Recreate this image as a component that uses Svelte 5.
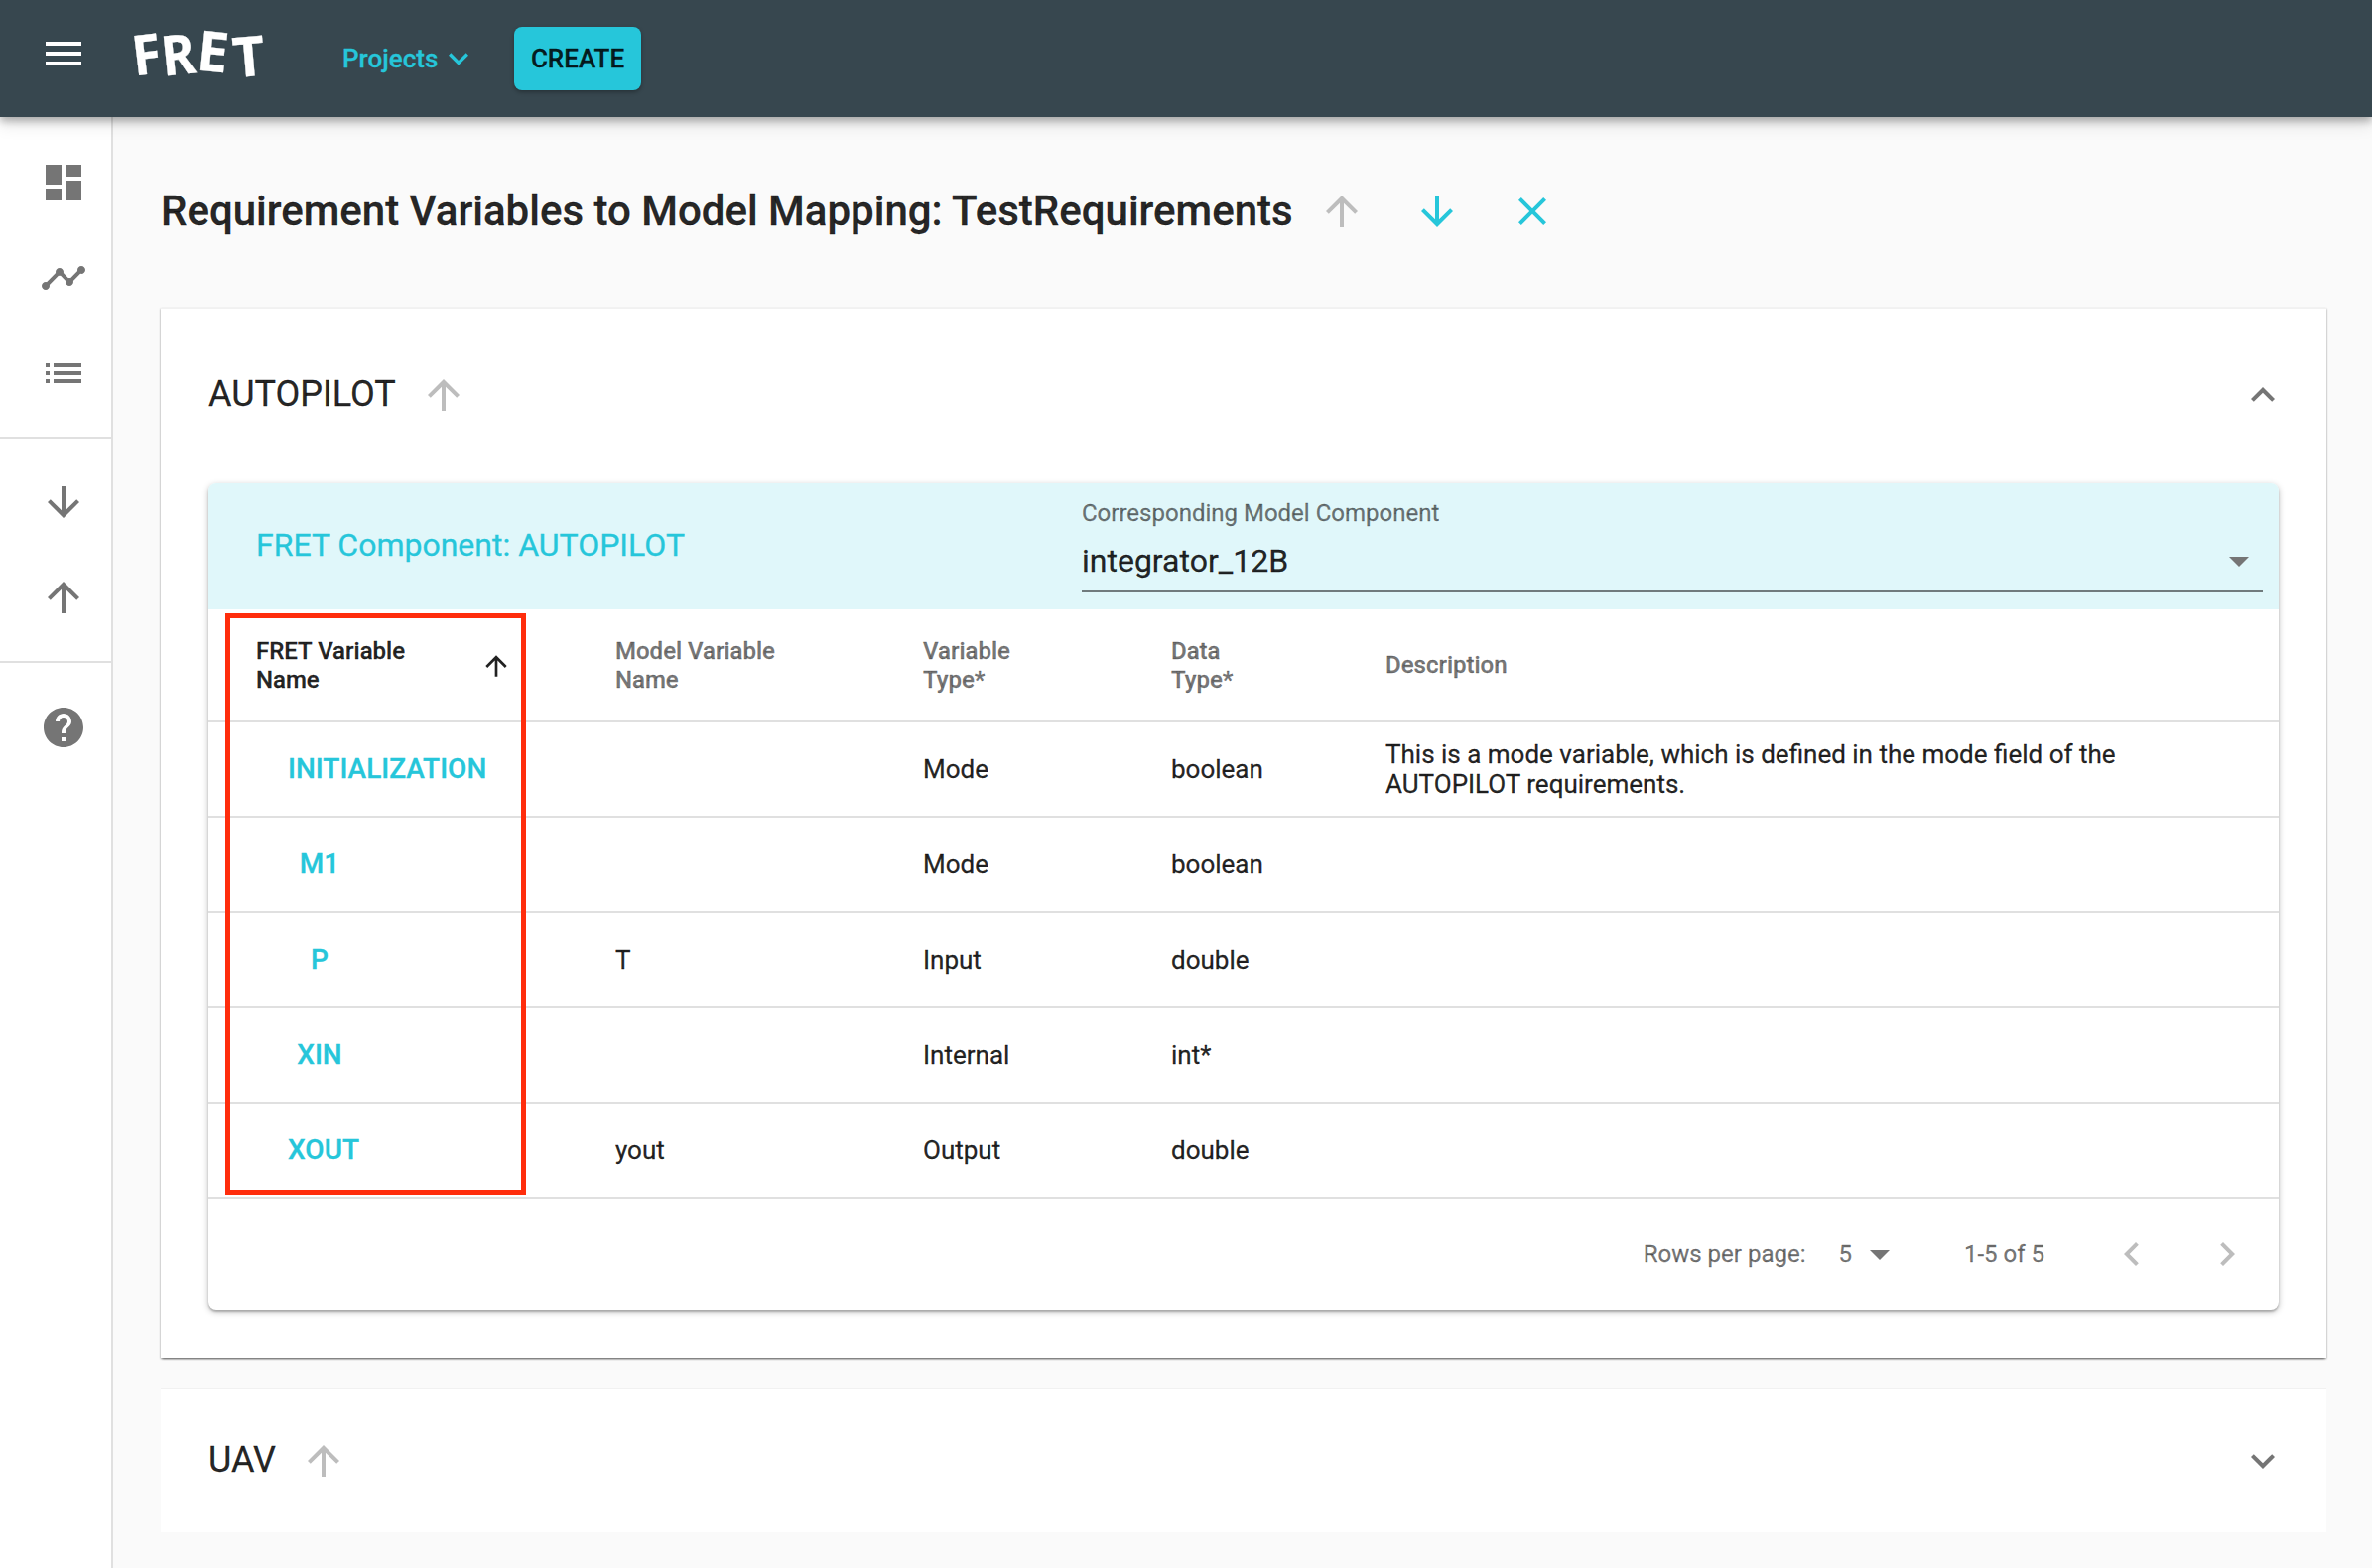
<script>
	const icons = {
		menu: 'M3 18h18v-2H3v2zm0-5h18v-2H3v2zm0-7v2h18V6H3z',
		dashboard: 'M3 13h8V3H3v10zm0 8h8v-6H3v6zm10 0h8V11h-8v10zm0-18v6h8V3h-8z',
		timeline: 'M23 8c0 1.1-.9 2-2 2-.18 0-.35-.02-.51-.07l-3.56 3.55c.05.16.07.34.07.52 0 1.1-.9 2-2 2s-2-.9-2-2c0-.18.02-.36.07-.52l-2.55-2.55c-.16.05-.34.07-.52.07s-.36-.02-.52-.07l-4.55 4.56c.05.16.07.33.07.51 0 1.1-.9 2-2 2s-2-.9-2-2 .9-2 2-2c.18 0 .35.02.51.07l4.56-4.55C8.02 9.36 8 9.18 8 9c0-1.1.9-2 2-2s2 .9 2 2c0 .18-.02.36-.07.52l2.55 2.55c.16-.05.34-.07.52-.07s.36.02.52.07l3.55-3.56C19.02 8.35 19 8.18 19 8c0-1.1.9-2 2-2s2 .9 2 2z',
		list: 'M3 13h2v-2H3v2zm0 4h2v-2H3v2zm0-8h2V7H3v2zm4 4h14v-2H7v2zm0 4h14v-2H7v2zM7 7v2h14V7H7z',
		up: 'M4 12l1.41 1.41L11 7.83V20h2V7.83l5.58 5.59L20 12l-8-8-8 8z',
		down: 'M20 12l-1.41-1.41L13 16.17V4h-2v12.17l-5.58-5.59L4 12l8 8 8-8z',
		close: 'M19 6.41L17.59 5 12 10.59 6.41 5 5 6.41 10.59 12 5 17.59 6.41 19 12 13.41 17.59 19 19 17.59 13.41 12z',
		help: 'M12 2C6.48 2 2 6.48 2 12s4.48 10 10 10 10-4.48 10-10S17.52 2 12 2zm1 17h-2v-2h2v2zm2.07-7.75l-.9.92C13.45 12.9 13 13.5 13 15h-2v-.5c0-1.1.45-2.1 1.17-2.83l1.24-1.26c.37-.36.59-.86.59-1.41 0-1.1-.9-2-2-2s-2 .9-2 2H8c0-2.21 1.79-4 4-4s4 1.79 4 4c0 .88-.36 1.68-.93 2.25z',
		more: 'M16.59 8.59L12 13.17 7.41 8.59 6 10l6 6 6-6z',
		less: 'M12 8l-6 6 1.41 1.41L12 10.83l4.59 4.58L18 14z',
		left: 'M15.41 7.41L14 6l-6 6 6 6 1.41-1.41L10.83 12z',
		right: 'M10 6L8.59 7.41 13.17 12l-4.58 4.59L10 18l6-6z',
		caret: 'M7 10l5 5 5-5z'
	};

	const columns = [
		{ title: 'Model Variable Name', key: 'model' },
		{ title: 'Variable Type*', key: 'type', narrow: true },
		{ title: 'Data Type*', key: 'data', narrow: true },
		{ title: 'Description', key: 'desc' }
	];

	const rows = [
		{
			name: 'INITIALIZATION',
			model: '',
			type: 'Mode',
			data: 'boolean',
			desc: 'This is a mode variable, which is defined in the mode field of the AUTOPILOT requirements.'
		},
		{ name: 'M1', model: '', type: 'Mode', data: 'boolean', desc: '' },
		{ name: 'P', model: 'T', type: 'Input', data: 'double', desc: '' },
		{ name: 'XIN', model: '', type: 'Internal', data: 'int*', desc: '' },
		{ name: 'XOUT', model: 'yout', type: 'Output', data: 'double', desc: '' }
	];
</script>

{#snippet icon(name, cls = '')}
	<svg class="icon {cls}" viewBox="0 0 24 24" aria-hidden="true"><path d={icons[name]} /></svg>
{/snippet}

<div class="app">
	<header class="appbar">
		{@render icon('menu', 'white')}
		<div class="logo"><span>F</span><span>R</span><span>E</span><span>T</span></div>
		<div class="projects">Projects {@render icon('more', 'cyan small')}</div>
		<button class="create">CREATE</button>
	</header>

	<div class="body">
		<nav class="sidebar">
			<div class="nav-group">
				{@render icon('dashboard')}
				{@render icon('timeline')}
				{@render icon('list')}
			</div>
			<div class="nav-group second">
				{@render icon('down')}
				{@render icon('up')}
			</div>
			<div class="nav-group last">
				{@render icon('help')}
			</div>
		</nav>

		<main class="main">
			<div class="title-row">
				<h1>Requirement Variables to Model Mapping: TestRequirements</h1>
				<span class="icon-btn">{@render icon('up', 'disabled')}</span>
				<span class="icon-btn">{@render icon('down', 'cyan')}</span>
				<span class="icon-btn">{@render icon('close', 'cyan')}</span>
			</div>

			<section class="panel open">
				<div class="panel-head">
					<span class="panel-title">AUTOPILOT</span>
					<span class="icon-btn">{@render icon('up', 'disabled')}</span>
					<span class="expand">{@render icon('less')}</span>
				</div>
				<div class="panel-body">
					<div class="card">
						<div class="card-head">
							<div class="component">FRET Component: AUTOPILOT</div>
							<div class="select">
								<div class="select-label">Corresponding Model Component</div>
								<div class="select-value">
									<span>integrator_12B</span>
									{@render icon('caret')}
								</div>
							</div>
						</div>

						<table>
							<colgroup>
								<col class="c-name" />
								<col class="c-model" />
								<col class="c-type" />
								<col class="c-data" />
								<col />
							</colgroup>
							<thead>
								<tr>
									<th class="first">
										<div class="sorted">
											<span class="head-label active">FRET Variable Name</span>
											<svg class="sort" viewBox="0 0 24 24" aria-hidden="true"><path d={icons.up} /></svg>
										</div>
									</th>
									{#each columns as col}
										<th><div class="head-label" class:narrow={col.narrow}>{col.title}</div></th>
									{/each}
								</tr>
							</thead>
							<tbody>
								{#each rows as row}
									<tr>
										<td class="first"><span class="var-btn">{row.name}</span></td>
										{#each columns as col}
											<td class={col.key}>{row[col.key]}</td>
										{/each}
									</tr>
								{/each}
							</tbody>
						</table>

						<div class="pager">
							<span class="rows-label">Rows per page:</span>
							<span class="rows-value">5</span>
							{@render icon('caret')}
							<span class="range">1-5 of 5</span>
							<span class="icon-btn">{@render icon('left', 'disabled')}</span>
							<span class="icon-btn">{@render icon('right', 'disabled')}</span>
						</div>

						<div class="highlight"></div>
					</div>
				</div>
			</section>

			<section class="panel">
				<div class="panel-head closed">
					<span class="panel-title">UAV</span>
					<span class="icon-btn">{@render icon('up', 'disabled')}</span>
					<span class="expand">{@render icon('more')}</span>
				</div>
			</section>
		</main>
	</div>
</div>

<style>
	:global(body) {
		margin: 0;
		background: #fafafa;
	}
	.app {
		height: 1580px;
		overflow: hidden;
		display: flex;
		flex-direction: column;
		font-family: Roboto, "Liberation Sans", sans-serif;
		color: rgba(0, 0, 0, 0.87);
		-webkit-text-stroke: 0.3px;
	}
	.icon {
		width: 48px;
		height: 48px;
		flex: none;
		fill: #757575;
	}
	.icon.white {
		fill: #fff;
	}
	.icon.cyan {
		fill: #26c6da;
	}
	.icon.disabled {
		fill: #bdbdbd;
	}
	.icon.small {
		width: 40px;
		height: 40px;
	}
	.icon-btn {
		width: 96px;
		height: 96px;
		flex: none;
		display: flex;
		align-items: center;
		justify-content: center;
	}

	.appbar {
		height: 118px;
		flex: none;
		box-sizing: border-box;
		padding: 0 0 0 40px;
		display: flex;
		align-items: center;
		background: #37474f;
		box-shadow: 0 4px 8px rgba(0, 0, 0, 0.28), 0 8px 16px rgba(0, 0, 0, 0.1);
		position: relative;
		z-index: 2;
	}
	.appbar > .icon {
		margin-top: -10px;
	}
	.logo {
		width: 135px;
		margin-left: 44px;
		margin-top: -12px;
		display: flex;
		font-family: "Noto Sans", sans-serif;
		font-size: 56px;
		font-weight: 700;
		line-height: 56px;
		color: #fff;
	}
	.logo span {
		display: inline-block;
	}
	.logo span:nth-child(1) {
		transform: rotate(-7deg) scaleX(0.95);
	}
	.logo span:nth-child(2) {
		transform: rotate(-6deg) scaleX(0.92);
		margin-left: -2px;
	}
	.logo span:nth-child(3) {
		transform: rotate(6deg) translateY(-3px);
		margin-left: 1px;
	}
	.logo span:nth-child(4) {
		transform: rotate(-5deg) translateY(2px);
		margin-left: 4px;
	}
	.projects {
		margin-left: 78px;
		width: 173px;
		flex: none;
		display: flex;
		align-items: center;
		gap: 1px;
		font-size: 26px;
		font-weight: 500;
		color: #26c6da;
	}
	.create {
		width: 128px;
		height: 64px;
		padding: 0;
		border: 0;
		border-radius: 8px;
		background: #26c6da;
		color: rgba(0, 0, 0, 0.87);
		font-family: inherit;
		font-size: 26px;
		font-weight: 500;
		box-shadow: 0 2px 4px rgba(0, 0, 0, 0.3);
	}

	.body {
		flex: 1;
		display: flex;
		min-height: 0;
	}
	.sidebar {
		width: 114px;
		flex: none;
		box-sizing: border-box;
		background: #fff;
		border-right: 2px solid #e0e0e0;
	}
	.nav-group {
		display: flex;
		flex-direction: column;
		align-items: center;
		gap: 48px;
		padding: 42px 16px 40px 32px;
		border-bottom: 2px solid #e0e0e0;
	}
	.nav-group.second {
		padding-top: 40px;
		padding-bottom: 40px;
	}
	.nav-group.last {
		padding-top: 41px;
		border-bottom: 0;
	}

	.main {
		flex: 1;
		min-width: 0;
		padding: 47px 46px 0 48px;
	}
	.title-row {
		display: flex;
		align-items: center;
		margin-bottom: 49px;
	}
	h1 {
		margin: 0 1px 0 0;
		font-size: 42px;
		font-weight: 500;
		line-height: 96px;
		white-space: nowrap;
	}
	.panel {
		background: #fff;
		border-top: 1px solid #f1f1f1;
	}
	.panel.open {
		margin-bottom: 31px;
		box-shadow: 0 1px 2px rgba(0, 0, 0, 0.45), 0 3px 2px -2px rgba(0, 0, 0, 0.35);
	}
	.panel-head {
		height: 176px;
		box-sizing: border-box;
		padding: 0 40px 2px 48px;
		display: flex;
		align-items: center;
	}
	.panel-head.closed {
		height: 144px;
		padding-bottom: 0;
	}
	.panel-title {
		font-size: 36px;
		line-height: 48px;
		margin-top: -2px;
	}
	.expand {
		margin-left: auto;
		height: 48px;
	}
	.panel-body {
		padding: 0 48px 48px;
	}

	.card {
		position: relative;
		border-radius: 8px;
		background: #fff;
		box-shadow: 0 2px 6px rgba(0, 0, 0, 0.25), 0 2px 2px rgba(0, 0, 0, 0.2);
	}
	.card-head {
		height: 127px;
		display: grid;
		grid-template-columns: 880px 1190px;
		align-items: start;
		background: #e0f7fa;
		border-radius: 8px 8px 0 0;
	}
	.component {
		padding-left: 48px;
		line-height: 125px;
		font-size: 32px;
		color: #26c6da;
	}
	.select {
		padding-top: 18px;
	}
	.select-label {
		font-size: 24px;
		line-height: 24px;
		color: rgba(0, 0, 0, 0.54);
	}
	.select-value {
		margin-top: 16px;
		padding-bottom: 10px;
		display: flex;
		align-items: center;
		justify-content: space-between;
		font-size: 32px;
		line-height: 40px;
		height: 40px;
		border-bottom: 2px solid rgba(0, 0, 0, 0.5);
	}

	table {
		width: 100%;
		table-layout: fixed;
		border-collapse: separate;
		border-spacing: 0;
	}
	.c-name {
		width: 410px;
	}
	.c-model {
		width: 310px;
	}
	.c-type {
		width: 250px;
	}
	.c-data {
		width: 216px;
	}
	th,
	td {
		box-sizing: border-box;
		padding: 0;
		text-align: left;
		border-bottom: 2px solid #e0e0e0;
	}
	th {
		height: 114px;
		padding-top: 1px;
		font-size: 24px;
		font-weight: 500;
		line-height: 29px;
		color: rgba(0, 0, 0, 0.54);
	}
	td {
		height: 96px;
		font-size: 26px;
		line-height: 30px;
	}
	.first {
		padding-left: 48px;
	}
	.desc {
		padding-right: 120px;
	}
	.sorted {
		width: 258px;
		display: flex;
		align-items: center;
		justify-content: space-between;
	}
	.head-label {
		display: block;
		max-width: 170px;
	}
	.head-label.narrow {
		max-width: 110px;
	}
	.head-label.active {
		color: rgba(0, 0, 0, 0.87);
	}
	.sort {
		width: 32px;
		height: 32px;
		fill: rgba(0, 0, 0, 0.87);
	}
	.var-btn {
		display: inline-flex;
		justify-content: center;
		min-width: 128px;
		padding: 0 32px;
		box-sizing: border-box;
		font-size: 28px;
		font-weight: 500;
		color: #26c6da;
	}

	.pager {
		height: 112px;
		padding-right: 4px;
		display: flex;
		align-items: center;
		justify-content: flex-end;
		font-size: 24px;
		color: rgba(0, 0, 0, 0.54);
	}
	.rows-value {
		margin-left: 33px;
		margin-right: 4px;
	}
	.range {
		margin-left: 61px;
		margin-right: 40px;
	}
	.highlight {
		position: absolute;
		left: 17px;
		top: 131px;
		width: 303px;
		height: 586px;
		box-sizing: border-box;
		border: 5px solid #ff2d0c;
	}
</style>
